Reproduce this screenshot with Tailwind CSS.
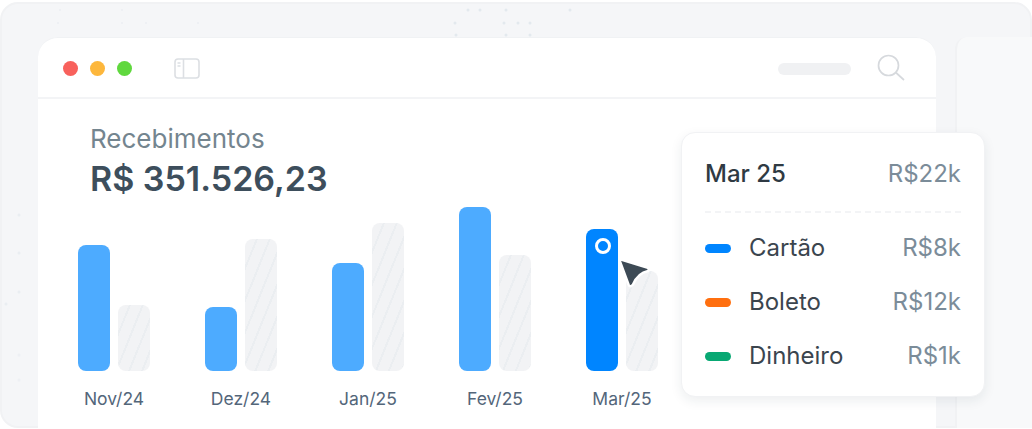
<!DOCTYPE html>
<html lang="pt-BR">
<head>
    <meta charset="UTF-8">
    <meta name="viewport" content="width=device-width, initial-scale=1.0">
    <title>Recebimentos</title>
    <script src="https://cdn.jsdelivr.net/npm/@tailwindcss/browser@4"></script>
</head>
<body class="bg-white font-['Inter',sans-serif]">
    <div class="relative w-[1032px] h-[429px] overflow-hidden">
        <!-- frame -->
        <div class="absolute inset-x-0 top-[2px] bottom-[1px] rounded-[18px] border-2 border-[#f1f2f4] bg-[#f5f6f8]"></div>

        <!-- faint dots -->
        <svg class="absolute left-0 top-0" width="1032" height="429" fill="#e3e9ee">
            <circle cx="468" cy="10" r="1.5"/><circle cx="480" cy="10" r="1.5"/><circle cx="506" cy="10" r="1.5"/><circle cx="570" cy="10" r="1.5"/>
            <circle cx="455" cy="23" r="1.5"/><circle cx="504" cy="23" r="1.5"/><circle cx="518" cy="23" r="1.5"/><circle cx="530" cy="23" r="1.5"/>
            <circle cx="456" cy="35" r="1.5"/><circle cx="506" cy="35" r="1.5"/><circle cx="530" cy="35" r="1.5"/>
            <circle cx="60" cy="10" r="1" opacity=".5"/><circle cx="122" cy="10" r="1" opacity=".5"/><circle cx="58" cy="23" r="1" opacity=".5"/><circle cx="122" cy="23" r="1" opacity=".5"/><circle cx="146" cy="23" r="1" opacity=".5"/><circle cx="198" cy="23" r="1" opacity=".5"/>
            <circle cx="19" cy="215" r="1.5" opacity=".6"/><circle cx="19" cy="253" r="1.5" opacity=".6"/><circle cx="19" cy="292" r="1.5" opacity=".6"/><circle cx="6" cy="304" r="1.5" opacity=".6"/><circle cx="19" cy="355" r="1.5" opacity=".4"/><circle cx="19" cy="380" r="1.5" opacity=".4"/>
        </svg>

        <div class="relative flex gap-[19px] pl-[38px] pt-[37px] h-[428px]">
            <!-- app window -->
            <div class="w-[898px] flex-none rounded-t-[20px] bg-white border-t border-[#f0f2f4] flex flex-col">
                <div class="h-[61px] flex-none flex items-center border-b-2 border-[#f3f4f6] pt-[2px] pl-[25px] pr-[31px]">
                    <div class="flex gap-[12px]">
                        <span class="w-[15px] h-[15px] rounded-full bg-[#f8615c]"></span>
                        <span class="w-[15px] h-[15px] rounded-full bg-[#fdb73c]"></span>
                        <span class="w-[15px] h-[15px] rounded-full bg-[#60d83e]"></span>
                    </div>
                    <svg class="ml-[42px]" width="26" height="21" viewBox="0 0 26 21" fill="none" stroke="#dcdfe3" stroke-width="1.6">
                        <rect x="1" y="1" width="24" height="19" rx="3"/>
                        <path d="M9.5 1v19M3.5 5h3M3.500 8h3"/>
                    </svg>
                    <div class="ml-auto w-[73px] h-[12px] rounded-full bg-[#f0f1f3]"></div>
                    <svg class="ml-[26px] -mt-[1px]" width="28" height="28" viewBox="0 0 28 28" fill="none" stroke="#d6d9dd" stroke-width="1.7">
                        <circle cx="11.5" cy="11.5" r="10"/>
                        <path d="M18.8 18.5 27 26"/>
                    </svg>
                </div>

                <div class="pl-[52px] pt-[25px]">
                    <p class="text-[26px] leading-[30px] text-[#74858f]">Recebimentos</p>
                    <p class="mt-[4px] text-[34px] leading-[42px] font-semibold text-[#3d4e5c]">R$ 351.526,23</p>
                </div>

                <!-- chart -->
                <div class="pl-[40px] mt-[7px] flex gap-[55px] items-end">
                    <div class="w-[72px] flex flex-col">
                        <div class="h-[164px] flex items-end gap-[8px]">
                            <div class="w-[32px] h-[126px] rounded-[8px] bg-[#4dabff]"></div>
                            <div class="w-[32px] h-[66px] rounded-[8px] bg-[#f2f3f5] bg-[repeating-linear-gradient(112deg,#f2f3f5_0,#f2f3f5_10px,#ebeef1_10px,#ebeef1_12px)]"></div>
                        </div>
                        <p class="mt-[17px] text-center text-[17.5px] leading-[22px] text-[#53667a] whitespace-nowrap">Nov/24</p>
                    </div>
                    <div class="w-[72px] flex flex-col">
                        <div class="h-[164px] flex items-end gap-[8px]">
                            <div class="w-[32px] h-[64px] rounded-[8px] bg-[#4dabff]"></div>
                            <div class="w-[32px] h-[132px] rounded-[8px] bg-[#f2f3f5] bg-[repeating-linear-gradient(112deg,#f2f3f5_0,#f2f3f5_10px,#ebeef1_10px,#ebeef1_12px)]"></div>
                        </div>
                        <p class="mt-[17px] text-center text-[17.5px] leading-[22px] text-[#53667a] whitespace-nowrap">Dez/24</p>
                    </div>
                    <div class="w-[72px] flex flex-col">
                        <div class="h-[164px] flex items-end gap-[8px]">
                            <div class="w-[32px] h-[108px] rounded-[8px] bg-[#4dabff]"></div>
                            <div class="w-[32px] h-[148px] rounded-[8px] bg-[#f2f3f5] bg-[repeating-linear-gradient(112deg,#f2f3f5_0,#f2f3f5_10px,#ebeef1_10px,#ebeef1_12px)]"></div>
                        </div>
                        <p class="mt-[17px] text-center text-[17.5px] leading-[22px] text-[#53667a] whitespace-nowrap">Jan/25</p>
                    </div>
                    <div class="w-[72px] flex flex-col">
                        <div class="h-[164px] flex items-end gap-[8px]">
                            <div class="w-[32px] h-[164px] rounded-[8px] bg-[#4dabff]"></div>
                            <div class="w-[32px] h-[116px] rounded-[8px] bg-[#f2f3f5] bg-[repeating-linear-gradient(112deg,#f2f3f5_0,#f2f3f5_10px,#ebeef1_10px,#ebeef1_12px)]"></div>
                        </div>
                        <p class="mt-[17px] text-center text-[17.5px] leading-[22px] text-[#53667a] whitespace-nowrap">Fev/25</p>
                    </div>
                    <div class="w-[72px] flex flex-col">
                        <div class="h-[164px] flex items-end gap-[8px]">
                            <div class="w-[32px] h-[142px] rounded-[8px] bg-[#0085ff] flex justify-center pt-[9px]">
                                <span class="ml-[2px] w-[16px] h-[16px] rounded-full border-[3px] border-white"></span>
                            </div>
                            <div class="w-[32px] h-[100px] rounded-[8px] bg-[#f2f3f5] bg-[repeating-linear-gradient(112deg,#f2f3f5_0,#f2f3f5_10px,#ebeef1_10px,#ebeef1_12px)]"></div>
                        </div>
                        <p class="mt-[17px] text-center text-[17.5px] leading-[22px] text-[#53667a] whitespace-nowrap">Mar/25</p>
                    </div>
                </div>
            </div>
            <!-- panel behind -->
            <div class="flex-1 rounded-tl-[12px] bg-[#f8f9fa] border-l-2 border-[#f1f2f4]"></div>
        </div>

        <!-- cursor -->
        <svg class="absolute left-[612px] top-[252px]" width="44" height="42" viewBox="0 0 44 42">
            <path d="M9 7.500 35 15.500Q38 17 36 19Q26 21 21 32.500Q18 36 16.500 32.500L8 9.500Q7.800 7.500 9 7.500Z" fill="#3d4a55" stroke="#fff" stroke-width="2.500" stroke-linejoin="round"/>
        </svg>

        <!-- tooltip -->
        <div class="absolute left-[681px] top-[132px] w-[304px] h-[265px] rounded-[14px] bg-white border border-[#f1f2f4] shadow-[0_4px_12px_rgba(30,45,60,0.08)] pl-[23px] pr-[23px]">
            <div class="flex justify-between items-center pt-[24px] h-[58px]">
                <span class="text-[24px] leading-[30px] font-medium text-[#2f3a43]">Mar 25</span>
                <span class="text-[24px] leading-[30px] text-[#7b8c99]">R$22k</span>
            </div>
            <div class="mt-[20px] border-t-2 border-dashed border-[#f3f4f6]"></div>
            <div class="mt-[20px] flex items-center h-[30px]">
                <span class="w-[26px] h-[9px] rounded-full bg-[#0085ff]"></span>
                <span class="ml-[18px] text-[24px] leading-[30px] text-[#3b454e]">Cartão</span>
                <span class="ml-auto text-[24px] leading-[30px] text-[#7b8c99]">R$8k</span>
            </div>
            <div class="mt-[24px] flex items-center h-[30px]">
                <span class="w-[26px] h-[9px] rounded-full bg-[#ff6f0f]"></span>
                <span class="ml-[18px] text-[24px] leading-[30px] text-[#3b454e]">Boleto</span>
                <span class="ml-auto text-[24px] leading-[30px] text-[#7b8c99]">R$12k</span>
            </div>
            <div class="mt-[24px] flex items-center h-[30px]">
                <span class="w-[26px] h-[9px] rounded-full bg-[#08a873]"></span>
                <span class="ml-[18px] text-[24px] leading-[30px] text-[#3b454e]">Dinheiro</span>
                <span class="ml-auto text-[24px] leading-[30px] text-[#7b8c99]">R$1k</span>
            </div>
        </div>
    </div>
</body>
</html>
